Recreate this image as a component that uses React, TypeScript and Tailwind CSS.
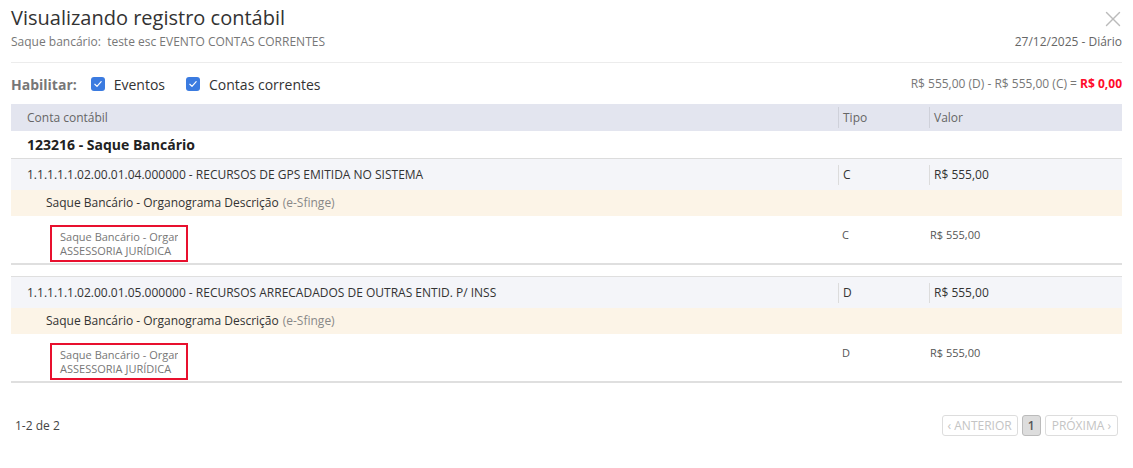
import { X } from "lucide-react";

type Lancamento = {
  conta: string;
  tipo: string;
  valor: string;
  orgao: string;
  detalhe: string;
};

const lancamentos: Lancamento[] = [
  {
    conta: "1.1.1.1.1.02.00.01.04.000000 - RECURSOS DE GPS EMITIDA NO SISTEMA",
    tipo: "C",
    valor: "R$ 555,00",
    orgao: "Saque Bancário - Organograma Descrição",
    detalhe: "ASSESSORIA JURÍDICA",
  },
  {
    conta: "1.1.1.1.1.02.00.01.05.000000 - RECURSOS ARRECADADOS DE OUTRAS ENTID. P/ INSS",
    tipo: "D",
    valor: "R$ 555,00",
    orgao: "Saque Bancário - Organograma Descrição",
    detalhe: "ASSESSORIA JURÍDICA",
  },
];

const Checkbox = ({ label }: { label: string }) => (
  <label className="flex items-center gap-[9px]">
    <span className="flex h-[14px] w-[14px] items-center justify-center rounded-[3px] bg-[#3b7be0]">
      <svg viewBox="0 0 12 12" className="h-[10px] w-[10px]" fill="none" stroke="white" strokeWidth="1.4">
        <path d="M2.2 6.3 4.8 8.8 9.8 3.2" strokeLinecap="round" strokeLinejoin="round" />
      </svg>
    </span>
    <span className="text-[14px] text-[#333]">{label}</span>
  </label>
);

const LancamentoRows = ({ item }: { item: Lancamento }) => (
  <>
    <div className="grid h-[31px] grid-cols-[827px_91px_192px] items-center bg-[#f4f5f9] text-[12px] text-[#333]">
      <div className="pl-[16px]">{item.conta}</div>
      <div className="flex items-center">
        <span className="flex h-[20px] items-center border-l border-[#dcdcdc] pl-[4px]">{item.tipo}</span>
      </div>
      <div className="flex items-center">
        <span className="flex h-[20px] items-center border-l border-[#dcdcdc] pl-[4px]">{item.valor}</span>
      </div>
    </div>
    <div className="flex h-[26px] items-center bg-[#fcf4e7] pl-[35px] text-[12px] text-[#333]">
      {item.orgao}
      <span className="ml-[4px] text-[#888]">(e-Sfinge)</span>
    </div>
    <div className="grid h-[49px] grid-cols-[827px_91px_192px] border-b-2 border-[#dfdfdf] text-[11px] text-[#555]">
      <div className="pl-[39px] pt-[9px]">
        <div className="w-[138px] border-2 border-[#e8102e] bg-white px-[8px] pt-[3px] pb-[2px] leading-[14px] text-[#777]">
          <div className="w-[118px] overflow-hidden whitespace-nowrap">{item.orgao}</div>
          <div className="whitespace-nowrap">{item.detalhe}</div>
        </div>
      </div>
      <div className="pl-[4px] pt-[11px]">{item.tipo}</div>
      <div className="pl-[1px] pt-[11px]">{item.valor}</div>
    </div>
  </>
);

export default function App() {
  return (
    <div
      className="h-[468px] w-[1133px] bg-white px-[11px] text-[#333]"
      style={{ fontFamily: "'Open Sans', sans-serif" }}
    >
      <div className="flex justify-between border-b border-[#ececec] pb-[12px]">
        <div>
          <h1 className="mt-[4px] h-[28px] text-[20px] leading-[28px] text-[#333]">
            Visualizando registro contábil
          </h1>
          <p className="mt-[2px] h-[16px] whitespace-pre text-[12px] leading-[16px] text-[#777]">
            Saque bancário:  teste esc EVENTO CONTAS CORRENTES
          </p>
        </div>
        <div className="flex flex-col items-end">
          <X className="-mr-[4px] mt-[6px] h-[26px] w-[26px] text-[#bbb]" strokeWidth={1.3} />
          <p className="mt-[2px] h-[16px] text-[12px] leading-[16px] text-[#666]">27/12/2025 - Diário</p>
        </div>
      </div>

      <div className="mb-[8px] mt-[9px] flex h-[24px] items-center justify-between">
        <div className="flex items-center">
          <span className="mr-[14px] text-[14px] font-bold text-[#777]">Habilitar:</span>
          <div className="flex items-center gap-[21px]">
            <Checkbox label="Eventos" />
            <Checkbox label="Contas correntes" />
          </div>
        </div>
        <p className="text-[12px] text-[#777]">
          R$ 555,00 (D) - R$ 555,00 (C) = <span className="font-bold text-[#ff0a2a]">R$ 0,00</span>
        </p>
      </div>

      <div className="grid h-[27px] grid-cols-[827px_91px_192px] items-center bg-[#e3e5ef] text-[12px] text-[#666]">
        <div className="pl-[16px]">Conta contábil</div>
        <div className="flex items-center">
          <span className="flex h-[21px] items-center border-l border-[#cfd1da] pl-[4px]">Tipo</span>
        </div>
        <div className="flex items-center">
          <span className="flex h-[21px] items-center border-l border-[#cfd1da] pl-[4px]">Valor</span>
        </div>
      </div>

      <div className="flex h-[28px] items-center border-b border-[#dcdcdc] pl-[16px] text-[14px] font-bold text-[#222]">
        123216 - Saque Bancário
      </div>

      <LancamentoRows item={lancamentos[0]} />
      <div className="h-[12px] border-b border-[#dfdfdf]" />
      <LancamentoRows item={lancamentos[1]} />

      <div className="mt-[32px] flex items-center justify-between pl-[4px]">
        <span className="text-[12px] text-[#444]">1-2 de 2</span>
        <div className="mr-[4px] flex items-center gap-[4px] text-[12px]">
          <span className="flex h-[21px] items-center rounded-[3px] border border-[#ddd] px-[5px] text-[#c4c4c4]">
            ‹ ANTERIOR
          </span>
          <span className="flex h-[21px] w-[19px] items-center justify-center rounded-[3px] border border-[#bbb] bg-[#ddd] font-semibold text-[#555]">
            1
          </span>
          <span className="flex h-[21px] items-center rounded-[3px] border border-[#ddd] px-[6px] text-[#c4c4c4]">
            PRÓXIMA ›
          </span>
        </div>
      </div>
    </div>
  );
}
